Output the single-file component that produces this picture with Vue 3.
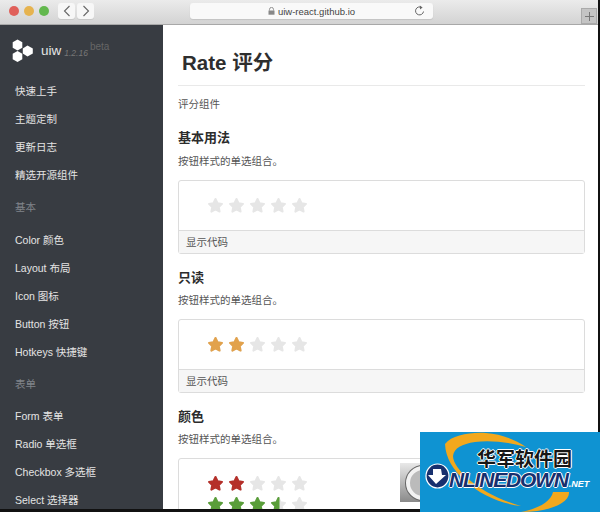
<script setup>
const nav = [
  { t: '快速上手' }, { t: '主题定制' }, { t: '更新日志' }, { t: '精选开源组件' },
  { t: '基本', g: true },
  { t: 'Color 颜色' }, { t: 'Layout 布局' }, { t: 'Icon 图标' }, { t: 'Button 按钮' }, { t: 'Hotkeys 快捷键' },
  { t: '表单', g: true },
  { t: 'Form 表单' }, { t: 'Radio 单选框' }, { t: 'Checkbox 多选框' }, { t: 'Select 选择器' }
]
const starPts = '8.5,2 10.5,6.2 15,6.9 11.8,10.1 12.6,14.6 8.5,12.4 4.4,14.6 5.2,10.1 2,6.9 6.5,6.2'
const sections = [
  { title: '基本用法', rows: [{ n: 0, c: '' }] },
  { title: '只读', rows: [{ n: 2, c: '#e2a24c' }] },
  { title: '颜色', rows: [{ n: 2, c: '#b5302a' }, { n: 3, c: '#5a9e3a', half: true }], open: true }
]
</script>

<template>
  <div class="page">
    <div class="frame">
      <header class="bar">
        <div class="lights">
          <i class="light red"></i><i class="light yellow"></i><i class="light green"></i>
        </div>
        <div class="navbtns">
          <span class="navbtn"><svg width="8" height="12" viewBox="0 0 8 12"><path d="M6.500 1 1.500 6l5 5" fill="none" stroke="#666" stroke-width="1.100"/></svg></span>
          <span class="navbtn"><svg width="8" height="12" viewBox="0 0 8 12"><path d="M1.500 1l5 5-5 5" fill="none" stroke="#666" stroke-width="1.100"/></svg></span>
        </div>
        <div class="url">
          <span class="host">
            <svg width="7" height="8" viewBox="0 0 7 8"><path d="M1.500 3.500V2.400a2 2 0 0 1 4 0v1.100" fill="none" stroke="#888" stroke-width=".9"/><rect x=".5" y="3.500" width="6" height="4.200" fill="#888"/></svg>
            uiw-react.github.io
          </span>
          <svg class="reload" width="11" height="12" viewBox="0 0 11 12"><path d="M7.800 2.600A4 4 0 1 0 9.500 6.500" fill="none" stroke="#666" stroke-width="1"/><path d="M5.800 .6 8.600 2.600 6 4.400z" fill="#666"/></svg>
        </div>
        <div class="plus"><svg width="9" height="9" viewBox="0 0 9 9"><path d="M4.500 0v9M0 4.500h9" stroke="#777" stroke-width="1"/></svg></div>
      </header>

      <div class="main">
        <aside class="side">
          <div class="brand">
            <svg class="logo" width="24" height="24" viewBox="0 0 24 24">
              <polygon fill="#fff" points="5.500,.6 10.300,3.300 10.300,8.700 5.500,11.400 .7,8.700 .7,3.300"/>
              <polygon fill="#fff" points="5.500,12.100 10.300,14.800 10.300,20.200 5.500,22.900 .7,20.200 .7,14.800"/>
              <polygon fill="#fff" points="15.500,6.500 20.800,9.400 20.800,14.600 15.500,17.500 10.800,14.600 10.800,9.400"/>
            </svg>
            <span class="name">uiw</span>
            <span class="ver">1.2.16</span>
            <span class="beta">beta</span>
          </div>
          <ul class="menu">
            <li v-for="item in nav" :key="item.t" :class="{ group: item.g }">{{ item.t }}</li>
          </ul>
        </aside>

        <section class="content">
          <h1 class="title">Rate 评分</h1>
          <p class="lead">评分组件</p>
          <div v-for="s in sections" :key="s.title" class="demo">
            <h3 class="sub">{{ s.title }}</h3>
            <p class="desc">按钮样式的单选组合。</p>
            <div class="box" :class="{ open: s.open }">
              <div class="stage">
                <div v-for="(r, ri) in s.rows" :key="ri" class="stars">
                  <span v-for="i in 5" :key="i" class="star">
                    <svg width="17" height="17" viewBox="0 0 17 17">
                      <polygon :points="starPts" fill="#e6e6e6" stroke="#e6e6e6" stroke-width="2" stroke-linejoin="round"/>
                      <polygon v-if="i <= r.n" :points="starPts" :fill="r.c" :stroke="r.c" stroke-width="2" stroke-linejoin="round"/>
                      <polygon v-if="r.half && i === r.n + 1" points="8.500,2 8.500,12.400 4.400,14.600 5.200,10.100 2,6.900 6.500,6.200" :fill="r.c" :stroke="r.c" stroke-width="2" stroke-linejoin="round"/>
                    </svg>
                  </span>
                </div>
              </div>
              <div v-if="!s.open" class="foot">显示代码</div>
            </div>
          </div>
        </section>
      </div>
    </div>

    <div class="circle-btn"><i></i></div>

    <div class="mark">
      <svg class="ring" width="180" height="80" viewBox="0 0 180 80">
        <path d="M25 12C32 3 50 0 66 1c14 1 28 6 40 14C88 10 70 8 55 10 42 12 34 16 33 24c0 14 30 40 68 50C64 70 26 42 25 12z" fill="#f2a81d"/>
        <path d="M133 60h16c1 11-20 20-48 20 16-3 30-10 32-20z" fill="#f2a81d"/>
      </svg>
      <div class="cn">华军软件园</div>
      <div class="en">
        <svg class="glob" width="25" height="26" viewBox="0 0 25 26">
          <ellipse cx="12.500" cy="13" rx="11.500" ry="12" fill="#17306e" stroke="#fff" stroke-width="1.200"/>
          <path d="M8 6h8l1 6h4L11 21 3 12h5z" fill="#fff"/>
        </svg>
        <span class="en-t">NLINEDOWN</span><span class="net">.NET</span>
      </div>
    </div>
  </div>
</template>

<style scoped>
.page {
  position: relative;
  width: 600px;
  height: 512px;
  overflow: hidden;
  font-family: "Helvetica Neue", "Liberation Sans", "Noto Sans CJK SC", sans-serif;
}
.frame {
  width: 600px;
  height: 512px;
  overflow: hidden;
  box-sizing: border-box;
  background: #fff;
  border-right: 2px solid #111;
  border-bottom: 3px solid #111;
  display: flex;
  flex-direction: column;
}
.bar {
  flex: none;
  height: 25px;
  box-sizing: border-box;
  background: linear-gradient(#ebebeb, #d3d3d3);
  border-bottom: 1px solid #a8a8a8;
  display: flex;
  align-items: flex-start;
  padding: 3px 0 0 9px;
}
.lights { display: flex; gap: 5px; margin-top: 3px; }
.light { width: 10px; height: 10px; border-radius: 50%; display: block; }
.red { background: #e0605a; }
.yellow { background: #e6b34f; }
.green { background: #63b84e; }
.navbtns { display: flex; gap: 2px; margin-left: 9px; }
.navbtn {
  width: 17px;
  height: 16px;
  background: #f7f7f7;
  border-radius: 3px;
  display: flex;
  align-items: center;
  justify-content: center;
  box-shadow: 0 1px 0 #c8c8c8;
}
.url {
  width: 243px;
  height: 16px;
  margin-left: 96px;
  background: #f9f9f9;
  border-radius: 3px;
  box-shadow: 0 1px 1px #c4c4c4;
  display: flex;
  align-items: center;
  justify-content: center;
  position: relative;
  font-size: 9.500px;
  color: #444;
}
.host { display: flex; align-items: center; gap: 3px; }
.reload { position: absolute; right: 8px; top: 2px; }
.plus {
  width: 16px;
  height: 16px;
  margin: 5px 0 0 148px;
  background: #c4c4c4;
  border: 1px solid #aaa;
  box-sizing: border-box;
  display: flex;
  align-items: center;
  justify-content: center;
}
.main { flex: 1; min-height: 0; display: flex; }
.side {
  flex: none;
  width: 163px;
  background: #383c42;
  color: #e4e4e4;
  overflow: hidden;
  box-sizing: border-box;
  padding: 14px 0 0 15px;
}
.brand { display: flex; align-items: flex-start; height: 24px; margin-left: -3px; }
.logo { flex: none; }
.name { font-size: 13.500px; color: #e6e6e6; margin: 4px 0 0 5px; line-height: 16px; }
.ver { font-size: 8.500px; font-style: italic; color: #777; margin: 8px 0 0 3px; line-height: 12px; }
.beta { font-size: 10px; color: #666; margin: 2px 0 0 2px; line-height: 12px; }
.menu { list-style: none; margin: 14px 0 0; padding: 0; }
.menu li { height: 28px; line-height: 28px; font-size: 10.500px; white-space: nowrap; }
.menu li.group { color: #80848a; height: 36.500px; line-height: 36px; }
.content {
  flex: 1;
  min-width: 0;
  overflow: hidden;
  box-sizing: border-box;
  padding: 0 13px 0 15px;
  color: #333;
}
.title {
  margin: 0;
  height: 61px;
  box-sizing: border-box;
  padding: 24px 0 0 4px;
  font-size: 20.500px;
  line-height: 28px;
  font-weight: 700;
  color: #2e2e2e;
  border-bottom: 1px solid #e9e9e9;
}
.lead { margin: 10px 0 0; font-size: 10.500px; line-height: 16px; color: #555; }
.sub { margin: 16px 0 0; font-size: 13px; line-height: 16px; font-weight: 700; color: #2c2c2c; }
.lead + .demo .sub { margin-top: 18px; }
.desc { margin: 6px 0 0; font-size: 10.500px; line-height: 16px; color: #555; }
.lead + .demo .desc { margin-top: 7px; }
.box {
  margin-top: 11px;
  height: 74px;
  box-sizing: border-box;
  border: 1px solid #dcdcdc;
  border-radius: 3px;
  display: flex;
  flex-direction: column;
}
.box.open { height: 120px; }
.stage { flex: 1; padding: 16px 0 0 28px; }
.stars { display: flex; gap: 4px; height: 21px; }
.star { width: 17px; height: 17px; display: block; }
.star svg { display: block; }
.foot {
  flex: none;
  height: 23px;
  line-height: 22px;
  box-sizing: border-box;
  padding-left: 7px;
  font-size: 10.500px;
  color: #555;
  background: #f6f6f6;
  border-top: 1px solid #dcdcdc;
}
.circle-btn {
  position: absolute;
  left: 400px;
  top: 463px;
  width: 30px;
  height: 39px;
  background: linear-gradient(#e8e8e8, #8a8a8a);
  overflow: hidden;
}
.circle-btn i {
  display: block;
  position: absolute;
  left: 6px;
  top: 3px;
  width: 34px;
  height: 34px;
  border-radius: 50%;
  border: 4px solid #f2f2f2;
  box-sizing: border-box;
  background: #bbb;
  box-shadow: 0 0 0 1px #666;
}
.mark {
  position: absolute;
  left: 420px;
  top: 432px;
  width: 180px;
  height: 80px;
  background: #0f93d2;
  overflow: hidden;
}
.ring { position: absolute; left: 0; top: 0; }
.cn {
  position: absolute;
  left: 57px;
  top: 16px;
  font-size: 19px;
  line-height: 24px;
  font-weight: 700;
  color: #161616;
  white-space: nowrap;
  text-shadow: 1px 0 #fff, -1px 0 #fff, 0 1px #fff, 0 -1px #fff;
}
.en {
  position: absolute;
  left: 5px;
  top: 31px;
  display: flex;
  align-items: center;
  height: 34px;
  white-space: nowrap;
}
.glob { flex: none; margin: 0 -1px 9px 0; }
.en-t {
  font-family: "Liberation Sans", sans-serif;
  font-size: 21px;
  line-height: 24px;
  font-weight: 700;
  font-style: italic;
  letter-spacing: -1.200px;
  color: #17306e;
  text-shadow: 1px 0 #fff, -1px 0 #fff, 0 1px #fff, 0 -1px #fff;
}
.net {
  font-family: "Liberation Sans", sans-serif;
  font-size: 9px;
  font-weight: 700;
  font-style: italic;
  color: #fff;
  margin: 8px 0 0 1px;
}
</style>
